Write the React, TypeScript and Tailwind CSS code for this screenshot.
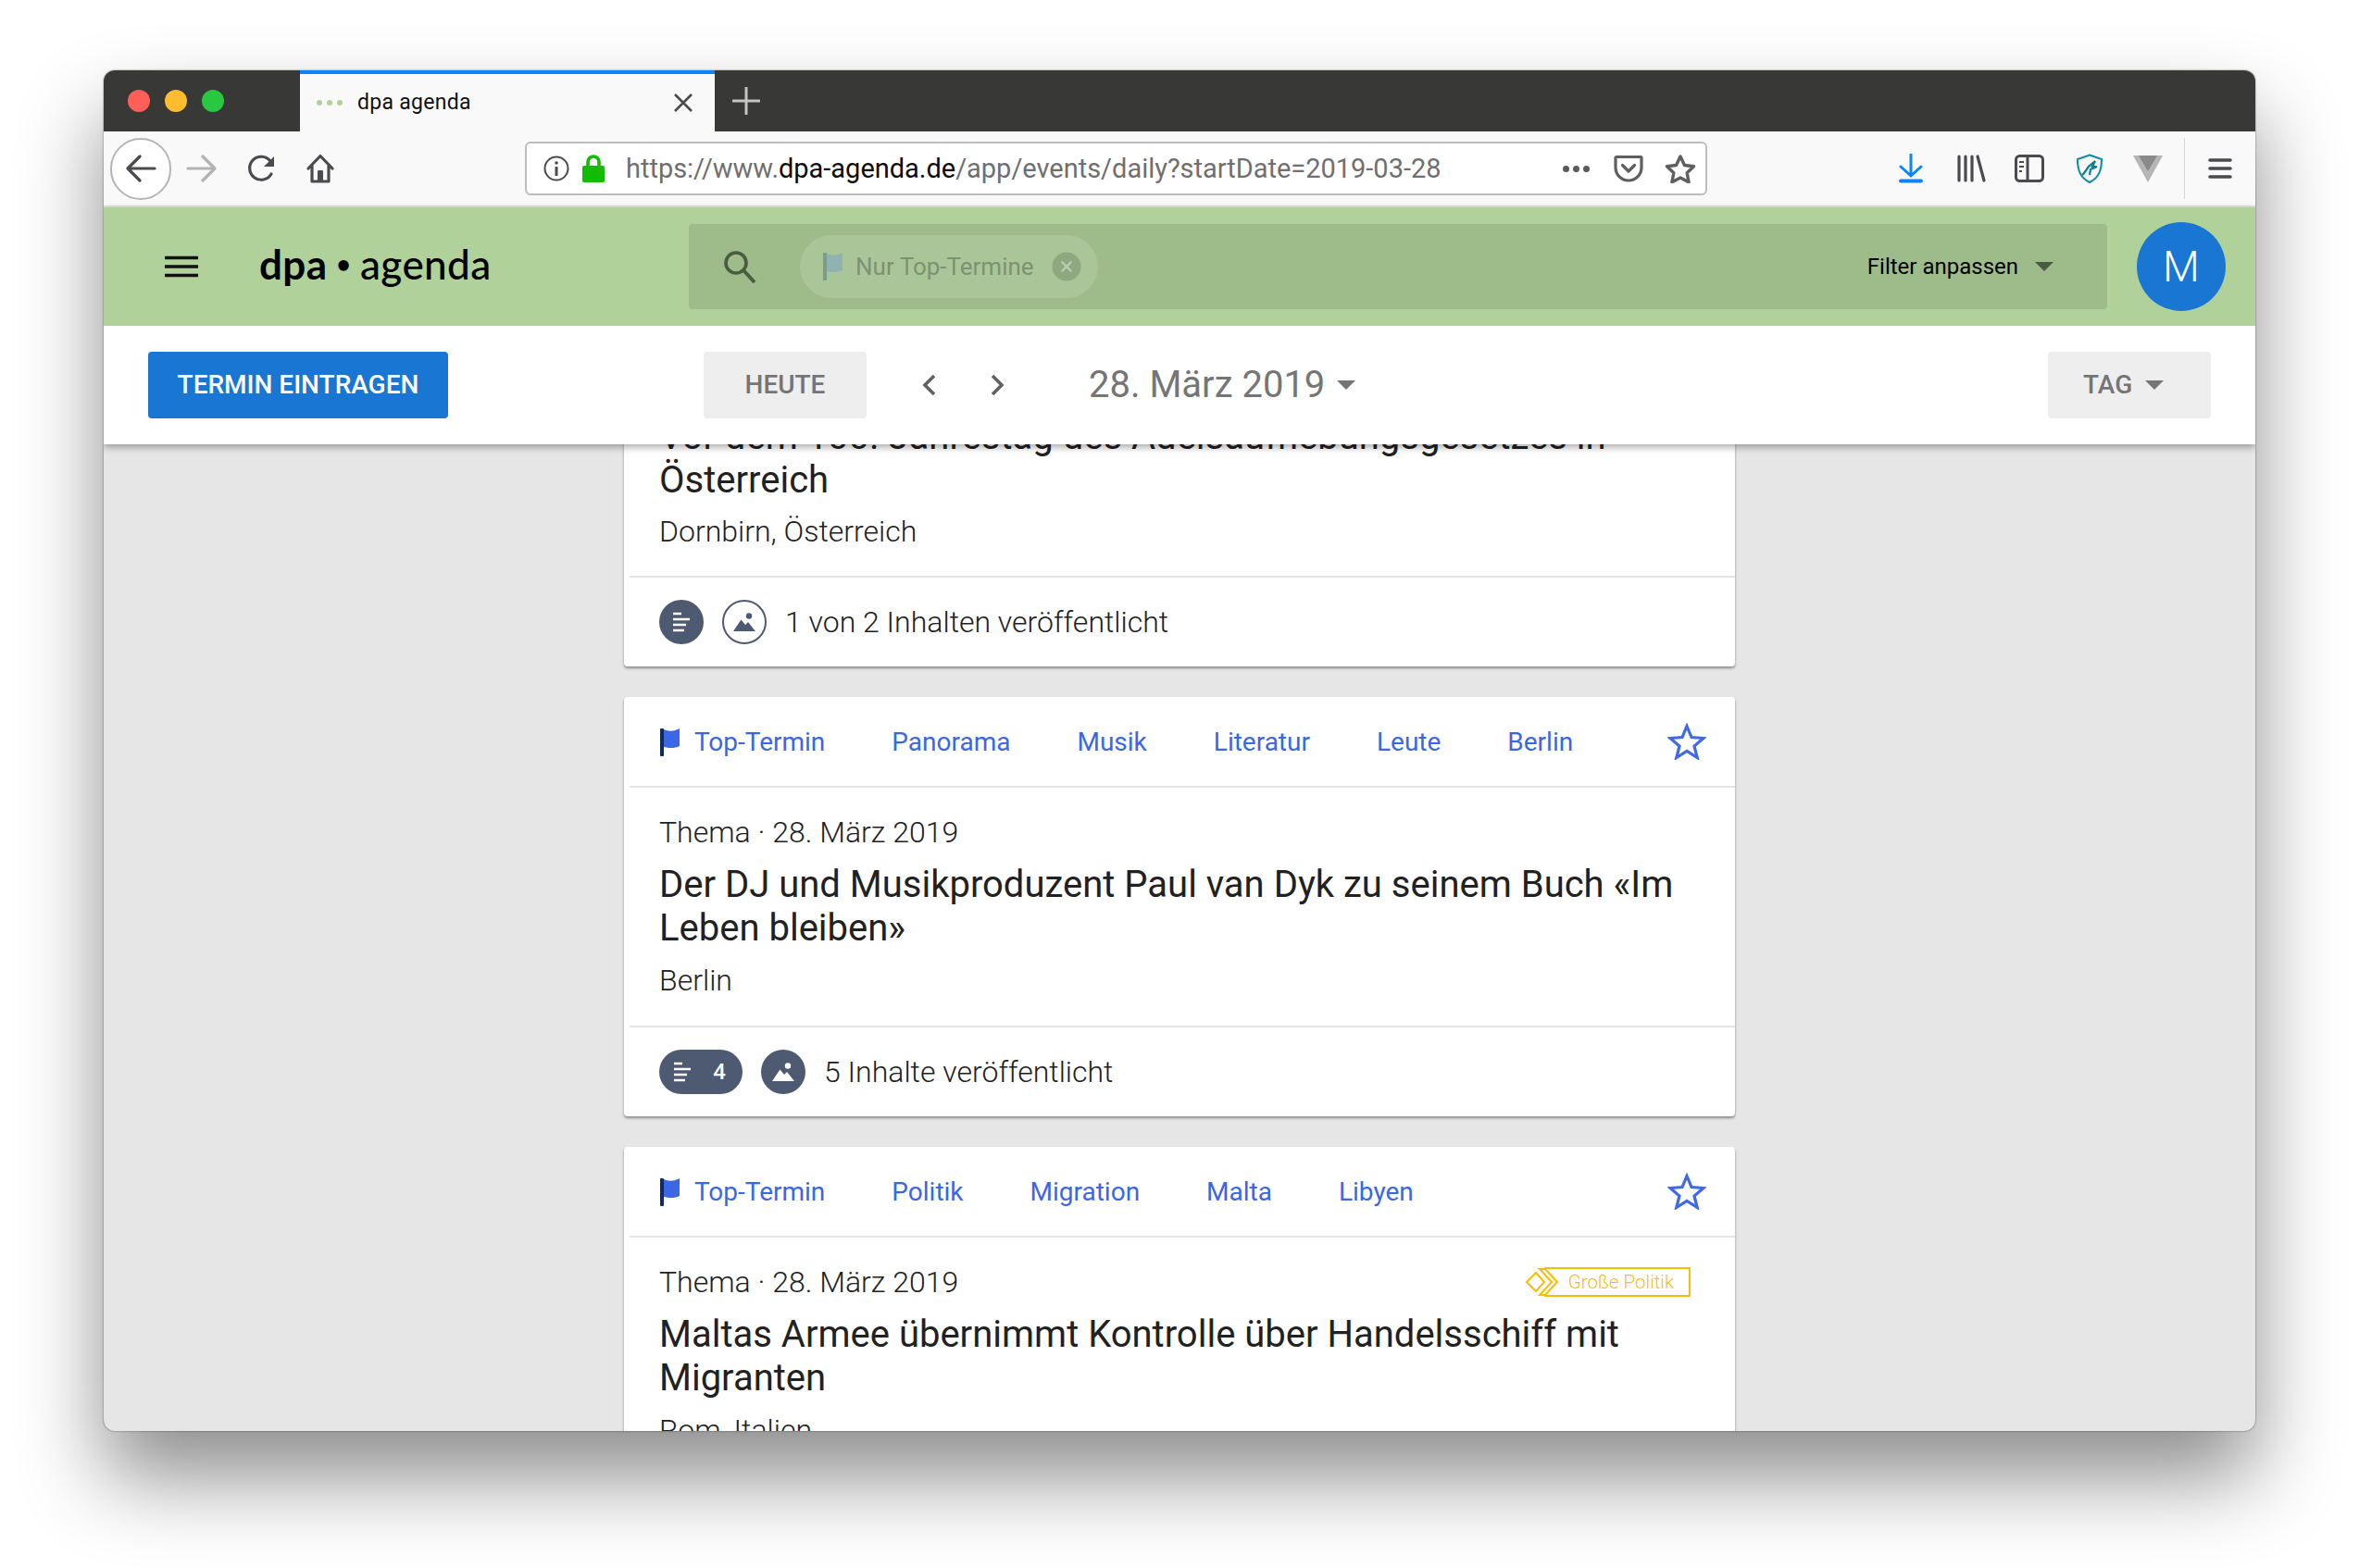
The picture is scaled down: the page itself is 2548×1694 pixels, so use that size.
import React from "react";

const Lines = ({ c = "#fff" }: { c?: string }) => (
  <svg width="22" height="22" viewBox="0 0 22 22"><path d="M2 2h9M2 8h18M2 14h14M2 20h12" stroke={c} strokeWidth="2.400" fill="none" /></svg>
);
const Pic = ({ c = "#fff" }: { c?: string }) => (
  <svg width="26" height="22" viewBox="0 0 26 22"><circle cx="18" cy="4.500" r="3.200" fill={c} /><path d="M1 21 9.500 8.500l4.500 5.500 3-3 8 10z" fill={c} /></svg>
);
const Flag = ({ pole = "#0b2a6f", fill = "#3b66e5" }: { pole?: string; fill?: string }) => (
  <svg width="24" height="30" viewBox="0 0 24 30"><rect x="1" y="0" width="4" height="30" rx="1" fill={pole} /><path d="M5 1c5 2 9 3 17-1v19c-6 3-12 2-17 1z" fill={fill} /></svg>
);
const Star = () => (
  <svg width="42" height="40" viewBox="0 0 42 40"><path d="M21 3.500l5 12 13 1-10 8.500 3.200 12.500L21 30.500 9.800 37.500 13 25 3 16.500l13-1z" fill="none" stroke="#3f6ae4" strokeWidth="3.200" strokeLinejoin="miter" /></svg>
);
const Caret = ({ c, w = 20 }: { c: string; w?: number }) => (
  <svg width={w} height={w / 2} viewBox="0 0 20 10"><path d="M0 0h20L10 10z" fill={c} /></svg>
);

const Tags = ({ items }: { items: string[] }) => (
  <div className="flex h-[98px] items-center justify-between border-b-2 border-[#e4e4e4] pr-[31px] pl-[32px]">
    <div className="flex items-center pt-[2px]">
      <span className="mr-[14px] flex h-[30px] w-[24px] items-center"><Flag /></span>
      <div className="flex gap-[72px] text-[28px] text-[#3b66e5]">
        {items.map((t) => <span key={t}>{t}</span>)}
      </div>
    </div>
    <Star />
  </div>
);

const Card = ({ tags, title, place, right, footer, extra }: { tags: string[]; title: string[]; place: string; right?: React.ReactNode; footer?: React.ReactNode; extra?: string }) => (
  <div className={`rounded-[4px] bg-white pl-[6px] shadow-[0_2px_3px_rgba(0,0,0,0.4)] ${extra ?? ""}`}>
    <Tags items={tags} />
    <div className="px-[32px] pt-[29px] pr-[48px] pb-[29px]">
      <div className="flex h-[38px] items-center justify-between text-[32px] font-light text-[#212121]">
        <span>Thema · 28. März 2019</span>
        {right}
      </div>
      <div className="mt-[14px] text-[40px] leading-[47px] text-[#212121]">
        {title.map((l) => <div key={l} className="whitespace-nowrap">{l}</div>)}
      </div>
      <div className="mt-[13px] h-[40px] text-[32px] leading-[40px] font-light text-[#212121]">{place}</div>
    </div>
    {footer}
  </div>
);

const Footer = ({ children, text }: { children: React.ReactNode; text: string }) => (
  <div className="flex h-[98px] items-center border-t-2 border-[#e4e4e4] pl-[32px]">
    {children}
    <span className="ml-[20px] text-[32px] font-light text-[#212121]">{text}</span>
  </div>
);

const Badge = () => (
  <div className="flex h-[32px] w-[178px] items-center">
    <svg width="38" height="32" viewBox="0 0 38 32" className="shrink-0">
      <path d="M1 16 11 6l9 10-9 10z" fill="none" stroke="#fbbc09" strokeWidth="2" />
      <path d="M15 2h6l13 14-13 14h-6l13-14z" fill="#fff" stroke="#fbbc09" strokeWidth="2" />
    </svg>
    <div className="-ml-[18px] flex h-[32px] flex-1 items-center justify-end border-2 border-l-0 border-[#fbbc09] pr-[16px] text-[20.5px] whitespace-nowrap text-[#fbbc09]">Große Politik</div>
  </div>
);

const NavBox = ({ ml, children }: { ml: string; children: React.ReactNode }) => (
  <div className={`${ml} flex h-[40px] w-[40px] shrink-0 items-center justify-center`}>{children}</div>
);

export default function App() {
  return (
    <div className="h-[1694px] w-[2548px] overflow-hidden bg-white pt-[76px] pl-[112px] font-['Roboto',sans-serif]">
      <div className="flex h-[1470px] w-[2324px] flex-col overflow-hidden rounded-[12px] bg-[#e6e6e6] shadow-[0_50px_90px_0px_rgba(0,0,0,0.45),0_0_2px_rgba(0,0,0,0.6)]">
        {/* tab strip */}
        <div className="flex h-[66px] shrink-0 bg-[#383837]">
          <div className="flex w-[212px] items-center gap-[16px] pl-[26px]">
            <span className="h-[24px] w-[24px] rounded-full bg-[#ff5f57]" />
            <span className="h-[24px] w-[24px] rounded-full bg-[#febc2e]" />
            <span className="h-[24px] w-[24px] rounded-full bg-[#28c840]" />
          </div>
          <div className="flex w-[448px] items-center border-t-[4px] border-[#0a84ff] bg-[#f9f9fa] pl-[18px]">
            <div className="flex w-[44px] gap-[5px]">
              <span className="h-[6px] w-[6px] rounded-full bg-[#b0d29a]" />
              <span className="h-[6px] w-[6px] rounded-full bg-[#b0d29a]" />
              <span className="h-[6px] w-[6px] rounded-full bg-[#b0d29a]" />
            </div>
            <span className="w-[121px] pt-[1px] text-[23px] tracking-[0.3px] whitespace-nowrap text-[#111]">dpa agenda</span>
            <svg width="22" height="22" viewBox="0 0 22 22" className="ml-[220px] shrink-0"><path d="M2 2l18 18M20 2 2 20" stroke="#4a4a4f" strokeWidth="2.600" /></svg>
          </div>
          <div className="ml-[14px] flex w-[40px] items-center justify-center">
            <svg width="30" height="30" viewBox="0 0 30 30"><path d="M15 1v28M1 15h28" stroke="#c4c4c4" strokeWidth="3" strokeLinecap="round" /></svg>
          </div>
        </div>

        {/* nav bar */}
        <div className="flex h-[82px] shrink-0 items-center border-b-2 border-[#e2e2e2] bg-[#f9f9fa]">
          <div className="ml-[7px] flex h-[67px] w-[66px] shrink-0 items-center justify-center rounded-full border-2 border-[#b5b5b5] bg-white">
            <svg width="34" height="30" viewBox="0 0 34 30"><path d="M32 15H4M16 2 3 15l13 13" fill="none" stroke="#4a4a4f" strokeWidth="3.200" strokeLinecap="round" strokeLinejoin="round" /></svg>
          </div>
          <NavBox ml="ml-[13px]"><svg width="34" height="30" viewBox="0 0 34 30"><path d="M2 15h28M18 2l13 13-13 13" fill="none" stroke="#b3b3b4" strokeWidth="3.200" strokeLinecap="round" strokeLinejoin="round" /></svg></NavBox>
          <NavBox ml="ml-[25px]"><svg width="32" height="30" viewBox="0 0 32 30"><path d="M26 21A12.500 12.500 0 1 1 25 7" fill="none" stroke="#4a4a4f" strokeWidth="3.200" strokeLinecap="round" /><path d="M29 2v11H18z" fill="#4a4a4f" /></svg></NavBox>
          <NavBox ml="ml-[23px]"><svg width="32" height="32" viewBox="0 0 32 32"><path d="M3 16 16 2.500 29 16M7 13v17h18V13" fill="none" stroke="#4a4a4f" strokeWidth="3.200" strokeLinejoin="round" strokeLinecap="round" /><rect x="13" y="18" width="6" height="12" rx="1" fill="#4a4a4f" /></svg></NavBox>

          <div className="ml-[201px] flex h-[58px] w-[1277px] shrink-0 items-center rounded-[6px] border-2 border-[#bdbdbd] bg-white">
            <svg width="28" height="28" viewBox="0 0 28 28" className="ml-[18px]"><circle cx="14" cy="14" r="12.500" fill="none" stroke="#4a4a4f" strokeWidth="2" /><circle cx="14" cy="8" r="1.800" fill="#4a4a4f" /><rect x="12.500" y="12" width="3" height="10" fill="#4a4a4f" /></svg>
            <svg width="24" height="30" viewBox="0 0 24 30" className="ml-[14px]"><path d="M6 14V8a6 6 0 0 1 12 0v6" fill="none" stroke="#12bc00" strokeWidth="3.600" /><rect x="0" y="12" width="24" height="18" rx="2" fill="#12bc00" /></svg>
            <span className="ml-[23px] pt-[2px] text-[29px] tracking-[-0.02px] whitespace-nowrap text-[#6f6f72]">https://www.<span className="text-[#0c0c0d]">dpa-agenda.de</span>/app/events/daily?startDate=2019-03-28</span>
            <div className="ml-auto flex items-center gap-[4px]">
              <span className="h-[7px] w-[7px] rounded-full bg-[#5a5a5c]" />
              <span className="h-[7px] w-[7px] rounded-full bg-[#5a5a5c]" />
              <span className="h-[7px] w-[7px] rounded-full bg-[#5a5a5c]" />
            </div>
            <svg width="32" height="30" viewBox="0 0 32 30" className="ml-[26px]"><path d="M3 2.500h26a1 1 0 0 1 1 1V14a14 14 0 0 1-28 0V3.500a1 1 0 0 1 1-1z" fill="none" stroke="#5f5f61" strokeWidth="3.200" /><path d="M9.500 11.500 16 18l6.500-6.500" fill="none" stroke="#5f5f61" strokeWidth="3.200" strokeLinecap="round" strokeLinejoin="round" /></svg>
            <svg width="34" height="32" viewBox="0 0 34 32" className="mr-[10px] ml-[23px]"><path d="M17 3l4.500 9.500 10 1.300-7.300 7 1.900 10L17 26l-9.100 4.800 1.900-10-7.300-7 10-1.300z" fill="none" stroke="#5f5f61" strokeWidth="3.400" strokeLinejoin="round" /></svg>
          </div>

          <NavBox ml="ml-[200px]"><svg width="26" height="32" viewBox="0 0 26 32"><path d="M13 1v23M2 14l11 10 11-10" fill="none" stroke="#0a84ff" strokeWidth="3" strokeLinecap="round" strokeLinejoin="round" /><rect x="0" y="27.500" width="26" height="4" rx="2" fill="#0a84ff" /></svg></NavBox>
          <NavBox ml="ml-[25px]"><svg width="32" height="30" viewBox="0 0 32 30"><path d="M3 2v26M10 2v26M17 2v26M23 2l7 26" stroke="#4a4a4f" strokeWidth="3.200" strokeLinecap="round" /></svg></NavBox>
          <NavBox ml="ml-[23px]"><svg width="32" height="30" viewBox="0 0 32 30"><rect x="1.500" y="1.500" width="29" height="27" rx="4" fill="none" stroke="#4a4a4f" strokeWidth="3" /><path d="M14 2v26" stroke="#4a4a4f" strokeWidth="3" /><path d="M5 8h5M5 13h5M5 18h3" stroke="#4a4a4f" strokeWidth="2" /></svg></NavBox>
          <NavBox ml="ml-[25px]"><svg width="30" height="32" viewBox="0 0 30 32"><path d="M15 1.500 28 6c0 12-3 20-13 25C5 26 2 18 2 6z" fill="none" stroke="#0e8ba3" strokeWidth="2" /><path d="M7 23c4-3 5-8 8-10l6-5-3 6 5 0-7 3-1 6" fill="none" stroke="#0b7e92" strokeWidth="2.200" /></svg></NavBox>
          <NavBox ml="ml-[23px]"><svg width="32" height="30" viewBox="0 0 32 30"><path d="M0 1h32L16 30z" fill="#b5b5b5" /><path d="M6 1h20L16 18z" fill="#8a8a8a" /></svg></NavBox>
          <div className="ml-[19px] h-[66px] w-[1px] shrink-0 bg-[#d6d6d6]" />
          <NavBox ml="ml-[18px]"><svg width="26" height="24" viewBox="0 0 26 24"><path d="M2 3h22M2 12h22M2 21h22" stroke="#4a4a4f" strokeWidth="3.600" strokeLinecap="round" /></svg></NavBox>
        </div>

        {/* app header */}
        <div className="relative z-10 shrink-0 shadow-[0_3px_8px_rgba(0,0,0,0.35)]">
          <div className="flex h-[128px] items-center bg-[#b0d29a]">
            <svg width="36" height="24" viewBox="0 0 36 24" className="ml-[66px] shrink-0"><path d="M0 2.500h36M0 12h36M0 21.500h36" stroke="#111" strokeWidth="3.600" /></svg>
            <div className="ml-[66px] flex w-[249px] shrink-0 items-center pb-[6px] font-['Lato',sans-serif] text-[44px] leading-none tracking-[0.4px] whitespace-nowrap text-black">
              <span className="font-bold">dpa</span><span className="mx-[10px] text-[26px] font-bold">•</span><span className="font-medium">agenda</span>
            </div>
            <div className="ml-[215px] flex h-[92px] w-[1532px] shrink-0 items-center rounded-[4px] bg-[#9dbc8a]">
              <svg width="40" height="40" viewBox="0 0 40 40" className="ml-[35px] shrink-0"><circle cx="16" cy="16" r="11" fill="none" stroke="#4b5a43" strokeWidth="3.600" /><path d="M24 24l12 13" stroke="#4b5a43" strokeWidth="3.800" /></svg>
              <div className="ml-[45px] flex h-[68px] w-[322px] shrink-0 items-center rounded-full bg-[#aac698] pl-[24px]">
                <Flag pole="#7a9c8c" fill="#8fb3b0" />
                <span className="ml-[12px] text-[26px] whitespace-nowrap text-[#7c9272]">Nur Top-Termine</span>
                <svg width="32" height="32" viewBox="0 0 32 32" className="ml-[19px] shrink-0"><circle cx="16" cy="16" r="15.500" fill="#8fa881" /><path d="M10.500 10.500l11 11M21.500 10.500l-11 11" stroke="#b8cfa9" strokeWidth="2.400" /></svg>
              </div>
              <span className="ml-auto text-[24px] text-black">Filter anpassen</span>
              <span className="mr-[58px] ml-[18px] flex"><Caret c="#4b5a43" /></span>
            </div>
            <div className="ml-[32px] flex h-[96px] w-[96px] shrink-0 items-center justify-center rounded-full bg-[#1976d2] text-[46px] font-light text-white">M</div>
          </div>
          <div className="flex h-[128px] items-center bg-white">
            <div className="ml-[48px] flex h-[72px] w-[324px] shrink-0 items-center justify-center rounded-[4px] bg-[#1976d2] text-[28px] font-medium text-white">TERMIN EINTRAGEN</div>
            <div className="ml-[276px] flex h-[72px] w-[176px] shrink-0 items-center justify-center rounded-[4px] bg-[#eeeeee] text-[28px] font-medium text-[#757575]">HEUTE</div>
            <svg width="40" height="40" viewBox="0 0 40 40" className="ml-[49px] shrink-0"><path d="M24 10 14 20l10 10" fill="none" stroke="#616161" strokeWidth="3.600" /></svg>
            <svg width="40" height="40" viewBox="0 0 40 40" className="ml-[31px] shrink-0"><path d="M16 10l10 10-10 10" fill="none" stroke="#616161" strokeWidth="3.600" /></svg>
            <span className="ml-[80px] text-[40px] whitespace-nowrap text-[#757575]">28. März 2019</span>
            <span className="ml-[13px] flex"><Caret c="#757575" /></span>
            <div className="mr-[48px] ml-auto flex h-[72px] w-[176px] shrink-0 items-center gap-[14px] rounded-[4px] bg-[#eeeeee] pl-[38px] text-[28px] font-medium text-[#757575]">
              TAG <Caret c="#757575" />
            </div>
          </div>
        </div>

        {/* list */}
        <div className="min-h-0 flex-1 overflow-hidden">
          <div className="mx-auto flex w-[1200px] flex-col gap-[33px]">
            <div className="-mt-[33px] rounded-[4px] bg-white pl-[6px] shadow-[0_2px_3px_rgba(0,0,0,0.4)]">
              <div className="px-[32px] pt-[1px] pb-[28px]">
                <div className="text-[40px] leading-[47px] whitespace-nowrap text-[#212121]">
                  <div>Vor dem 100. Jahrestag des Adelsaufhebungsgesetzes in</div>
                  <div>Österreich</div>
                </div>
                <div className="mt-[12px] h-[40px] text-[32px] leading-[40px] font-light text-[#212121]">Dornbirn, Österreich</div>
              </div>
              <Footer text="1 von 2 Inhalten veröffentlicht">
                <span className="flex h-[48px] w-[48px] items-center justify-center rounded-full bg-[#4e5a72]"><Lines /></span>
                <span className="ml-[20px] flex h-[48px] w-[48px] items-center justify-center rounded-full border-2 border-[#4e5a72]"><Pic c="#4e5a72" /></span>
              </Footer>
            </div>

            <Card
              tags={["Top-Termin", "Panorama", "Musik", "Literatur", "Leute", "Berlin"]}
              title={["Der DJ und Musikproduzent Paul van Dyk zu seinem Buch «Im", "Leben bleiben»"]}
              place="Berlin"
              footer={
                <Footer text="5 Inhalte veröffentlicht">
                  <span className="flex h-[48px] w-[90px] items-center justify-between rounded-full bg-[#4e5a72] pr-[18px] pl-[14px] text-[24px] font-medium text-white"><Lines /><span>4</span></span>
                  <span className="ml-[20px] flex h-[48px] w-[48px] items-center justify-center rounded-full bg-[#4e5a72]"><Pic /></span>
                </Footer>
              }
            />

            <Card
              tags={["Top-Termin", "Politik", "Migration", "Malta", "Libyen"]}
              title={["Maltas Armee übernimmt Kontrolle über Handelsschiff mit", "Migranten"]}
              place="Rom, Italien"
              right={<Badge />}
            />
          </div>
        </div>
      </div>
    </div>
  );
}
